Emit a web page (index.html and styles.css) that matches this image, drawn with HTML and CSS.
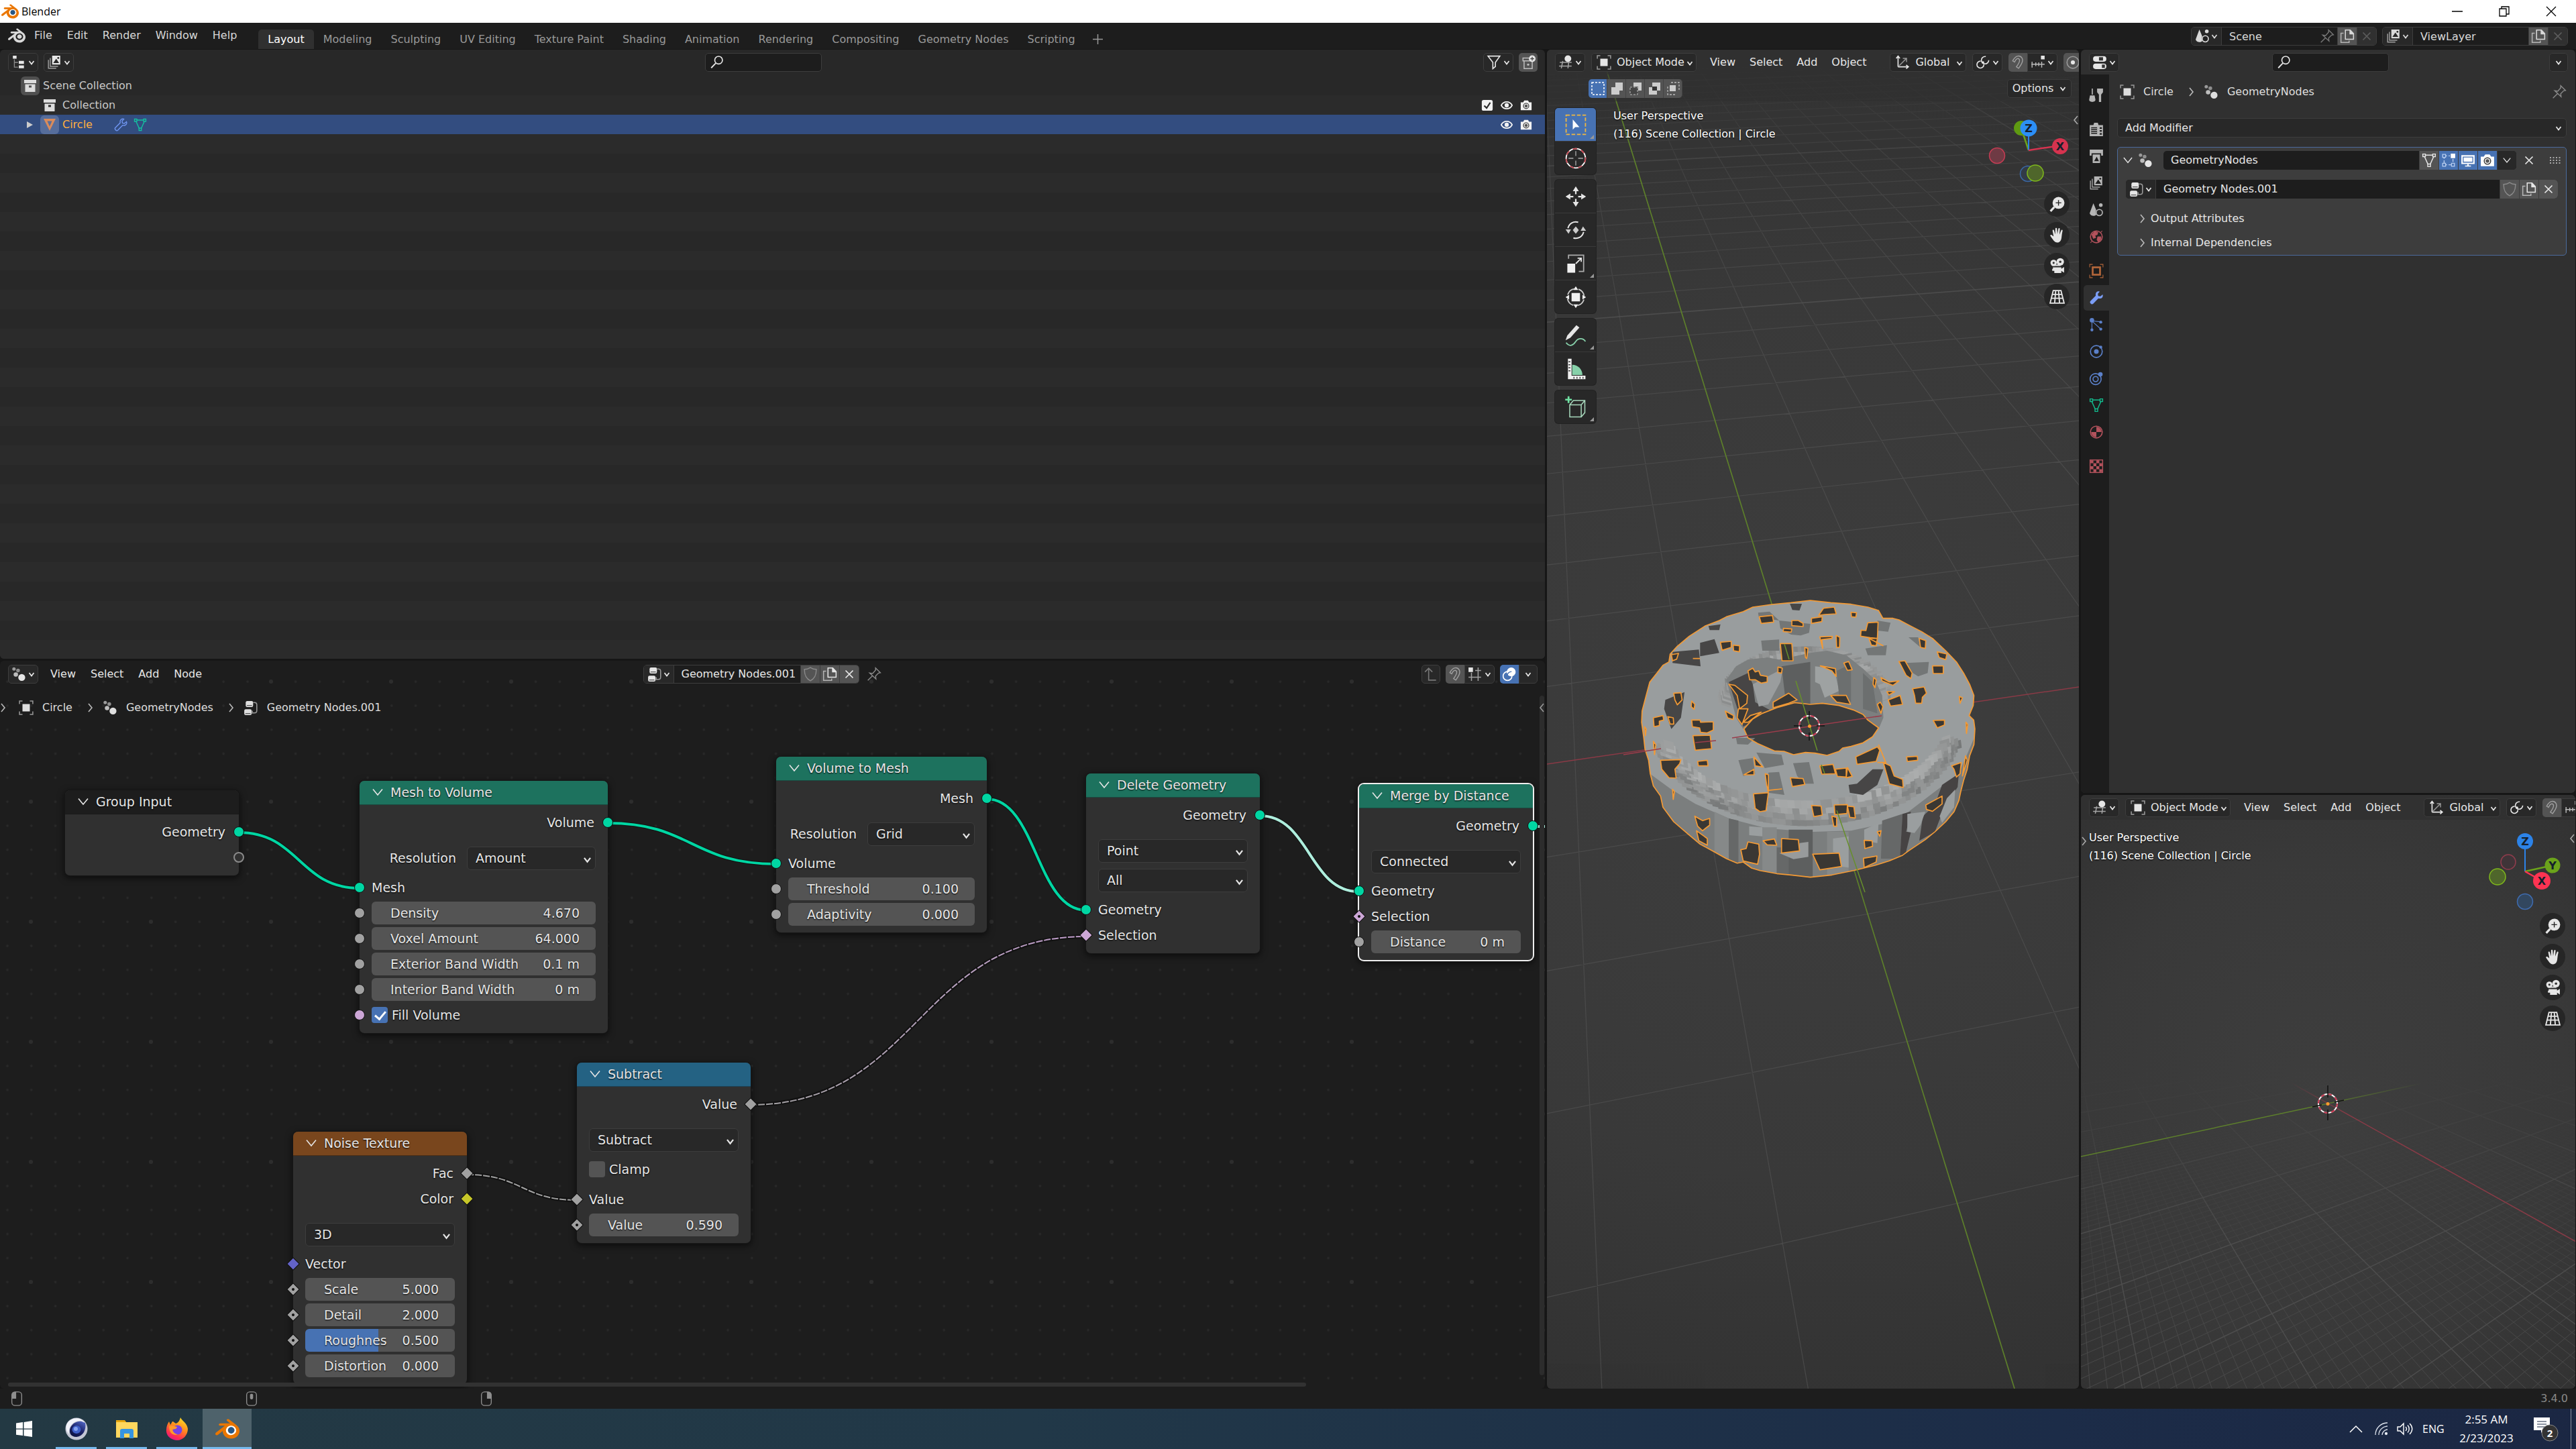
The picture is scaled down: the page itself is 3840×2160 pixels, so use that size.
FILE: index.html
```html
<!DOCTYPE html>
<html lang="en">
<head>
<meta charset="utf-8">
<title>Blender</title>
<link rel="stylesheet" href="styles.css">
</head>
<body>
<svg class="sprite" aria-hidden="true">
  <defs>
    <symbol id="i-down" viewBox="0 0 10 10"><path d="M1.5 3 5 7.5 8.5 3" fill="none" stroke="currentColor" stroke-width="1.7"/></symbol>
    <symbol id="i-fold" viewBox="0 0 16 16"><path d="M1 3.500 8 12 15 3.500" fill="none" stroke="currentColor" stroke-width="1.6"/></symbol>
    <symbol id="i-right" viewBox="0 0 10 16"><path d="M2 2l5 6-5 6" fill="none" stroke="currentColor" stroke-width="1.6"/></symbol>
    <symbol id="i-left" viewBox="0 0 10 16"><path d="M8 2 3 8l5 6" fill="none" stroke="currentColor" stroke-width="1.6"/></symbol>
    <symbol id="i-x" viewBox="0 0 20 20"><path d="M5 5l10 10M15 5 5 15" fill="none" stroke="currentColor" stroke-width="1.6"/></symbol>
    <symbol id="i-blender" viewBox="0 0 24 24"><path fill="currentColor" d="M12.51 13.214c.046-.8.438-1.506 1.03-2.006a3.424 3.424 0 0 1 2.212-.79c.85 0 1.631.3 2.211.79.592.5.983 1.206 1.028 2.005.045.823-.285 1.586-.865 2.153a3.389 3.389 0 0 1-2.374.938 3.393 3.393 0 0 1-2.376-.938c-.58-.567-.91-1.33-.865-2.152M7.35 14.831c.006.314.106.922.256 1.398a7.372 7.372 0 0 0 1.593 2.757 8.227 8.227 0 0 0 2.787 2.001 8.947 8.947 0 0 0 3.66.76 8.964 8.964 0 0 0 3.657-.772 8.285 8.285 0 0 0 2.785-2.01 7.428 7.428 0 0 0 1.592-2.762 6.964 6.964 0 0 0 .25-3.074 7.123 7.123 0 0 0-1.016-2.779 7.764 7.764 0 0 0-1.852-2.043h.002L13.566 2.55l-.02-.015c-.492-.378-1.319-.376-1.86.002-.547.382-.609 1.015-.123 1.415l-.001.001 3.126 2.543-9.53.01h-.013c-.788.001-1.545.518-1.695 1.172-.154.665.38 1.217 1.2 1.22V8.9l4.83-.01-8.62 6.617-.034.025c-.813.622-1.075 1.658-.563 2.313.52.667 1.625.668 2.447.004L7.414 14s-.069.52-.063.831zm12.09 1.741c-.97.988-2.326 1.548-3.795 1.55-1.47.004-2.827-.552-3.797-1.538a4.51 4.51 0 0 1-1.036-1.622 4.282 4.282 0 0 1 .282-3.519 4.702 4.702 0 0 1 1.153-1.371c.942-.768 2.141-1.183 3.396-1.185 1.256-.002 2.455.41 3.398 1.175.48.391.87.854 1.152 1.367a4.28 4.28 0 0 1 .522 1.706 4.236 4.236 0 0 1-.239 1.811 4.54 4.54 0 0 1-1.035 1.626"/></symbol>
    <symbol id="i-blendercolor" viewBox="0 0 24 24"><circle cx="15.700" cy="13.400" r="6" fill="#fff"/><use href="#i-blender" width="24" height="24" color="#ea7600"/><circle cx="15.750" cy="13.400" r="3.200" fill="#265787"/></symbol>
    <symbol id="i-tree" viewBox="0 0 20 20"><path d="M2 1h5v4H2zM10 8h7v4h-7zM10 14h7v4h-7z" fill="currentColor"/><path d="M4 6v10.500h5M4 10h5" fill="none" stroke="#8c8c8c" stroke-width="1.200"/></symbol>
    <symbol id="i-layers" viewBox="0 0 20 20"><path d="M7 1h11v12H7zM8.500 11h8L12.500 5z" fill="currentColor" fill-rule="evenodd"/><circle cx="15.300" cy="4" r="1.300" fill="#222"/><path d="M4.500 4v11.500H15M2 6.500V18h10.500" fill="none" stroke="#a0a0a0" stroke-width="1.300"/></symbol>
    <symbol id="i-search" viewBox="0 0 20 20"><circle cx="12" cy="7" r="5.200" fill="none" stroke="currentColor" stroke-width="1.500"/><path d="M8.200 11 2 17.500" stroke="currentColor" stroke-width="1.700"/></symbol>
    <symbol id="i-filter" viewBox="0 0 20 20"><path d="M2 1.500h16L12 10v5.500L8.500 18.500V10z" fill="none" stroke="currentColor" stroke-width="1.500"/></symbol>
    <symbol id="i-newcol" viewBox="0 0 20 20"><path d="M11 4H3v4h14M4.500 8v10.500h11V9" fill="none" stroke="#bdbdbd" stroke-width="1.400"/><circle cx="10" cy="13" r="1.500" fill="#bdbdbd"/><circle cx="15.500" cy="5" r="4.500" fill="#e6e6e6"/><path d="M15.500 2.500v5M13 5h5" stroke="#444" stroke-width="1.200"/></symbol>
    <symbol id="i-box" viewBox="0 0 20 20"><path d="M1 1h18v5H1zM2.500 7.500h15V19h-15zM8 9.500v3h4v-3z" fill="currentColor" fill-rule="evenodd"/></symbol>
    <symbol id="i-tri" viewBox="0 0 20 20"><path d="M1 1h18l-9 18zM6.500 4.500 10 12.500l3.500-8z" fill="currentColor" fill-rule="evenodd"/></symbol>
    <symbol id="i-wrench" viewBox="0 0 20 20"><path d="M18.500 5.500 15.500 8l-3-.5-.5-3L14.500 1.500C11.500.5 9 2.500 9 5.500c0 1 .2 1.500.2 1.500L1.800 14.500c-1.500 2 1.700 5.200 3.700 3.700l7.300-7.500s3 1 5-1c1.200-1.200 1.200-3 .7-4.200z" fill="none" stroke="currentColor" stroke-width="1.400"/></symbol>
    <symbol id="i-wrenchfill" viewBox="0 0 20 20"><path d="M18.500 5.500 15.500 8l-3-.5-.5-3L14.500 1.500C11.500.5 9 2.500 9 5.500c0 1 .2 1.500.2 1.500L1.800 14.500c-1.500 2 1.700 5.200 3.700 3.700l7.300-7.500s3 1 5-1c1.200-1.200 1.200-3 .7-4.200z" fill="currentColor"/></symbol>
    <symbol id="i-mesh" viewBox="0 0 20 20"><path d="M5 3h10M3.800 5l4.700 10.500M16.200 5l-4.700 10.500" stroke="currentColor" stroke-width="1.400"/><path d="M1.500 1.500h3.500v3.500H1.500zM15 1.500h3.500v3.500H15zM8.200 15h3.600v3.500H8.200z" fill="none" stroke="currentColor" stroke-width="1.300"/></symbol>
    <symbol id="i-check" viewBox="0 0 20 20"><rect x="1" y="1" width="18" height="18" rx="3" fill="currentColor"/><path d="M5 10.500 9 14.500 15 5.500" fill="none" stroke="#2b2b2b" stroke-width="2.400"/></symbol>
    <symbol id="i-eye" viewBox="0 0 20 20"><path d="M1 10c4-7.500 14-7.500 18 0-4 7.500-14 7.500-18 0z" fill="none" stroke="currentColor" stroke-width="2"/><circle cx="10" cy="10" r="3.500" fill="currentColor"/></symbol>
    <symbol id="i-camera" viewBox="0 0 20 20"><path d="M1 5h4l2-3h6l2 3h4v13H1z" fill="currentColor"/><circle cx="10" cy="11" r="5" fill="#333"/><circle cx="10" cy="11" r="3.700" fill="currentColor"/><circle cx="10" cy="11" r="2.500" fill="#555"/></symbol>
    <symbol id="i-view3d" viewBox="0 0 20 20"><path d="M2 10h16M1 15h17M6 8 4 18M14 10l-1 8" stroke="#a5a5a5" stroke-width="1.400"/><circle cx="13" cy="5" r="4.500" fill="currentColor"/></symbol>
    <symbol id="i-object" viewBox="0 0 20 20"><path d="M5 5h10v10H5z" fill="currentColor"/><path d="M1 5V1h4M15 1h4v4M19 15v4h-4M5 19H1v-4" fill="none" stroke="#999" stroke-width="1.400"/></symbol>
    <symbol id="i-axes" viewBox="0 0 20 20"><path d="M4 16V2M1.500 4.500 4 1.500l2.500 3M4 16h13M15 13.500l3 2.500-3 2.500" fill="none" stroke="currentColor" stroke-width="1.500"/><path d="M5 15 15 5M10.500 4.500H15.500V9.500" fill="none" stroke="#999" stroke-width="1.300"/></symbol>
    <symbol id="i-pivot" viewBox="0 0 20 20"><circle cx="6.500" cy="13" r="4.700" fill="none" stroke="currentColor" stroke-width="1.500" stroke-dasharray="22 7"/><circle cx="12.800" cy="7" r="5" fill="none" stroke="currentColor" stroke-width="1.500" stroke-dasharray="24 7"/><circle cx="10" cy="10" r="1.700" fill="currentColor"/></symbol>
    <symbol id="i-magnet" viewBox="0 0 20 20"><path d="M3 8c4-8 10-8 12.500-4s-1 9-4.500 14l-3-2c3-4 5-8 4-10s-4-2-6.500 3.500z" fill="none" stroke="#a0a0a0" stroke-width="1.300"/></symbol>
    <symbol id="i-snapinc" viewBox="0 0 20 20"><path d="M1 12.500h18M2 9v8M7 10v5M11 10v5M15 9v8" stroke="#bbb" stroke-width="1.300"/><path d="M14 1h5v5h-5z" fill="currentColor"/></symbol>
    <symbol id="i-prop" viewBox="0 0 20 20"><circle cx="10" cy="10" r="8" fill="none" stroke="#999" stroke-width="1.500"/><circle cx="10" cy="10" r="2.800" fill="currentColor"/></symbol>
    <symbol id="i-snapgrid" viewBox="0 0 20 20"><path d="M1 14h17M5 8v11M14 1v18M10 5h8" stroke="#a0a0a0" stroke-width="1.400"/><path d="M1 1h6v6H1z" fill="currentColor"/></symbol>
    <symbol id="i-overlay" viewBox="0 0 20 20"><circle cx="12.500" cy="7" r="6" fill="currentColor"/><circle cx="7.500" cy="12.500" r="6" fill="none" stroke="currentColor" stroke-width="1.500"/><path d="M7 12.500a6 6 0 0 1 6-6" fill="none" stroke="#4772b3" stroke-width="1.300"/></symbol>
    <symbol id="i-up" viewBox="0 0 20 20"><path d="M2 7l5-5 5 5M7 2v16h10" fill="none" stroke="#777" stroke-width="1.500"/></symbol>
    <symbol id="i-geo" viewBox="0 0 20 20"><circle cx="3.500" cy="3" r="2.300" fill="#9a9a9a"/><circle cx="9" cy="5" r="2.500" fill="#8f8f8f"/><circle cx="6" cy="10.500" r="3" fill="#bdbdbd"/><circle cx="14" cy="14.500" r="4.700" fill="currentColor"/></symbol>
    <symbol id="i-nodetree" viewBox="0 0 20 20"><rect x="3" y="1" width="10" height="8" rx="2" fill="currentColor"/><rect x="1" y="12" width="10" height="8" rx="2" fill="currentColor"/><path d="M4.500 7h7M2.500 18h7" stroke="#333" stroke-width="1"/><path d="M13 3h2c2 0 3 1 3 3v8c0 2-1 3-3 3h-3M12 14v4" fill="none" stroke="#999" stroke-width="1.400"/></symbol>
    <symbol id="i-shield" viewBox="0 0 20 20"><path d="M10 1c3 2 5.500 2.500 8 2.500 0 8-2 12.500-8 15.500C4 16 2 11.500 2 3.500c2.500 0 5-.5 8-2.500z" fill="none" stroke="#8a8a8a" stroke-width="1.400"/></symbol>
    <symbol id="i-copy" viewBox="0 0 20 20"><path d="M7.500 1.500H14l4.500 5V14h-11z" fill="none" stroke="currentColor" stroke-width="1.400"/><path d="M13 1v6.500h6z" fill="currentColor"/><path d="M5 6H1.500v12.500h11V16" fill="none" stroke="#b5b5b5" stroke-width="1.400"/></symbol>
    <symbol id="i-pin" viewBox="0 0 20 20"><path d="M12 1.500 18.500 8l-2.500.5-4 4 .5 4L4 8.500l4 .5 4-4.500zM7.500 12.500 1.500 18.500" fill="none" stroke="currentColor" stroke-width="1.300"/></symbol>
    <symbol id="i-scene" viewBox="0 0 20 20"><path d="M6 1l5 12c0 3-2 5-4.500 5S1 16.500 1 14z" fill="currentColor"/><circle cx="14.500" cy="13" r="5.500" fill="#222"/><circle cx="14" cy="13.500" r="4.200" fill="none" stroke="currentColor" stroke-width="1.500"/><circle cx="16" cy="3.500" r="2.500" fill="currentColor"/></symbol>
    <symbol id="i-props" viewBox="0 0 20 20"><rect x="1" y="1.500" width="18" height="7.500" rx="3.500" fill="currentColor"/><rect x="1" y="11.500" width="18" height="7.500" rx="3.500" fill="currentColor"/><path d="M9 3h5.500v4.500H9zM13 13h4v4.500h-4z" fill="#333"/></symbol>
    <symbol id="i-tools" viewBox="0 0 20 20"><path d="M4.500 1v8M2 11h5l1 5c0 3-7 3-7 0z" fill="currentColor" stroke="currentColor" stroke-width="1.500"/><path d="M11 1v5l2.500 3v10h3V9L19 6V1M13.500 1.500V5h3V1.500" fill="currentColor"/></symbol>
    <symbol id="i-render" viewBox="0 0 20 20"><path d="M1 4h5l1-3h5l1 3h6v15H1zM3 7h8v9H3zM14.500 7v2h3V7zM14.500 11v2h3v-2zM14.500 15v2h3v-2z" fill="currentColor" fill-rule="evenodd"/><path d="M3 9h8M3 11.500h8M3 14h8" stroke="currentColor"/></symbol>
    <symbol id="i-output" viewBox="0 0 20 20"><path d="M1 1h18v8h-2.500V6h-13v3H1z" fill="currentColor"/><path d="M5 7.500h10V19H5zM7 16.500h6.500l-3-6z" fill="currentColor" fill-rule="evenodd"/></symbol>
    <symbol id="i-world" viewBox="0 0 20 20"><circle cx="10" cy="10" r="8" fill="none" stroke="currentColor" stroke-width="1.500"/><path d="M4 7l4-4 4 1-1 3-3 1 1 3-3 1zM12 10l4 0 0 3-3 4-2-3zM18 2 16 4M2 18l2-2" fill="currentColor" stroke="currentColor"/></symbol>
    <symbol id="i-objprop" viewBox="0 0 20 20"><rect x="5" y="5" width="10" height="10" fill="none" stroke="currentColor" stroke-width="2.500"/><path d="M1 5V1h4M15 1h4v4M19 15v4h-4M5 19H1v-4" fill="none" stroke="currentColor"/></symbol>
    <symbol id="i-particles" viewBox="0 0 20 20"><path d="M4 6v12M5 5l10 1M5 6l10 9" stroke="currentColor"/><circle cx="4" cy="4" r="3" fill="currentColor"/><circle cx="16" cy="6.500" r="2" fill="currentColor"/><circle cx="16" cy="16" r="2" fill="currentColor"/><circle cx="4" cy="17" r="2" fill="currentColor"/></symbol>
    <symbol id="i-physics" viewBox="0 0 20 20"><circle cx="10" cy="10" r="8" fill="none" stroke="currentColor" stroke-width="1.500"/><circle cx="10" cy="10" r="3.200" fill="currentColor"/><circle cx="16" cy="4" r="2" fill="currentColor"/></symbol>
    <symbol id="i-constraint" viewBox="0 0 20 20"><circle cx="9" cy="11" r="7.500" fill="none" stroke="currentColor" stroke-width="1.500"/><circle cx="9" cy="11" r="3.500" fill="none" stroke="currentColor" stroke-width="1.500"/><circle cx="15.500" cy="4.500" r="3" fill="currentColor"/></symbol>
    <symbol id="i-material" viewBox="0 0 20 20"><circle cx="10" cy="10" r="8" fill="none" stroke="currentColor" stroke-width="1.500"/><path d="M10 10V3a7 7 0 0 1 7 7zM10 10v7a7 7 0 0 1-7-7z" fill="currentColor"/></symbol>
    <symbol id="i-texture" viewBox="0 0 20 20"><rect x="1.500" y="1.500" width="17" height="17" fill="none" stroke="currentColor" stroke-width="1.300"/><path d="M2 2h4v4H2zM10 2h4v4h-4zM6 6h4v4H6zM14 6h4v4h-4zM2 10h4v4H2zM10 10h4v4h-4zM6 14h4v4H6zM14 14h4v4h-4z" fill="currentColor"/></symbol>
    <symbol id="i-edit" viewBox="0 0 20 20"><path d="M4 4h8M4 4v12M4 16h12M16 8v8" stroke="#b8cdf0" stroke-width="1.300" stroke-dasharray="4 2"/><path d="M13 1h6v6h-6z" fill="currentColor"/><path d="M2 2h4v4H2zM2 14h4v4H2zM14 14h4v4h-4z" fill="#4772b3" stroke="#b8cdf0" stroke-width="1.200"/></symbol>
    <symbol id="i-monitor" viewBox="0 0 20 20"><path d="M1 3h18v12H1z" fill="currentColor"/><path d="M3.500 5.500h13v7h-13z" fill="none" stroke="#4772b3" stroke-width="1.200"/><path d="M9 15h2v2h3v1.500H6V17h3z" fill="currentColor"/></symbol>
    <symbol id="i-zoom" viewBox="0 0 24 24"><circle cx="14" cy="10" r="8.500" fill="currentColor"/><path d="M8 16 2.500 22" stroke="currentColor" stroke-width="3"/><path d="M14 6v8M10 10h8" stroke="#222" stroke-width="1.300"/></symbol>
    <symbol id="i-hand" viewBox="0 0 24 24"><path d="M7 14 5.500 6c-.4-2 1.800-2.300 2.200-.5L9.300 11 9.500 3c0-1.800 2.200-1.800 2.300 0l.6 7.500L13.700 3c.3-1.600 2.400-1.300 2.200.4l-.6 7.800 2.500-6c.6-1.500 2.400-.8 2 .8-1 4-1 6-1.500 9.500-.5 4-2.300 7-6 7-4.500 0-6-4-9.800-9-1-1.400.7-2.600 2-1.500z" fill="currentColor"/></symbol>
    <symbol id="i-cam" viewBox="0 0 24 24"><circle cx="7" cy="7.500" r="4.500" fill="currentColor"/><circle cx="16.500" cy="6" r="5.300" fill="currentColor"/><circle cx="7" cy="7.500" r="1.500" fill="#333"/><circle cx="16.500" cy="6" r="1.700" fill="#333"/><path d="M6 14h12v2l4-2.500v8L18 19v3H8v-3H5v-3h1zM5 10h12v2H5z" fill="currentColor"/></symbol>
    <symbol id="i-persp" viewBox="0 0 24 24"><path d="M6.500 3h11L22 21H2zM4.500 14h15M5.500 8.500h13M10 3 8.500 21M14 3l1.500 18" fill="none" stroke="currentColor" stroke-width="1.800"/></symbol>
    <symbol id="i-corner" viewBox="0 0 8 8"><path d="M8 0v8H0z" fill="currentColor"/></symbol>
    <symbol id="i-mouse-l" viewBox="0 0 18 24"><rect x="1" y="1" width="16" height="22" rx="5" fill="none" stroke="#8e8e8e" stroke-width="1.500"/><path d="M8 1v11H1V6c0-3 2-5 4-5z" fill="#8e8e8e"/></symbol>
    <symbol id="i-mouse-m" viewBox="0 0 18 24"><rect x="1" y="1" width="16" height="22" rx="5" fill="none" stroke="#8e8e8e" stroke-width="1.500"/><rect x="6.500" y="4" width="5" height="9" rx="2" fill="#8e8e8e"/></symbol>
    <symbol id="i-mouse-r" viewBox="0 0 18 24"><rect x="1" y="1" width="16" height="22" rx="5" fill="none" stroke="#8e8e8e" stroke-width="1.500"/><path d="M10 1v11h7V6c0-3-2-5-4-5z" fill="#8e8e8e"/></symbol>
  </defs>
</svg>

<header class="titlebar">
  <svg class="ic26"><use href="#i-blendercolor"/></svg><span>Blender</span>
  <div class="winbtns">
    <button aria-label="Minimize"><svg width="16" height="16"><path d="M0 8h16" stroke="#000" stroke-width="1.500"/></svg></button>
    <button aria-label="Restore"><svg width="16" height="16"><path d="M1 4h10v11H1zM4 4V1h11v11h-4" fill="none" stroke="#000" stroke-width="1.300"/></svg></button>
    <button aria-label="Close"><svg width="16" height="16"><path d="M1 1l14 14M15 1 1 15" stroke="#000" stroke-width="1.300"/></svg></button>
  </div>
</header>

<nav class="topbar">
  <button class="logo" aria-label="Blender menu"><svg class="ic26"><use href="#i-blender"/></svg></button>
  <div class="menu"><button>File</button><button>Edit</button><button>Render</button><button>Window</button><button>Help</button></div>
  <div class="tabs"><button class="active">Layout</button><button>Modeling</button><button>Sculpting</button><button>UV Editing</button><button>Texture Paint</button><button>Shading</button><button>Animation</button><button>Rendering</button><button>Compositing</button><button>Geometry Nodes</button><button>Scripting</button><button aria-label="Add workspace"><svg width="15" height="15"><path d="M7.500 0v15M0 7.500h15" stroke="#999" stroke-width="1.500"/></svg></button></div>
  <div class="idgroup top">
    <button class="idicon" aria-label="Browse scene"><svg class="ic"><use href="#i-scene"/></svg><svg class="cd"><use href="#i-down"/></svg></button>
    <input value="Scene" aria-label="Scene name"><svg class="ic dim pin"><use href="#i-pin"/></svg>
    <button class="seg" aria-label="New scene"><svg class="ic"><use href="#i-copy"/></svg></button><button class="seg off" aria-label="Delete scene"><svg class="ic"><use href="#i-x"/></svg></button>
  </div>
  <div class="idgroup top">
    <button class="idicon" aria-label="Browse view layer"><svg class="ic"><use href="#i-layers"/></svg><svg class="cd"><use href="#i-down"/></svg></button>
    <input value="ViewLayer" aria-label="View layer name">
    <button class="seg" aria-label="New view layer"><svg class="ic"><use href="#i-copy"/></svg></button><button class="seg off" aria-label="Delete view layer"><svg class="ic"><use href="#i-x"/></svg></button>
  </div>
</nav>

<main class="workspace">
  <div class="col col-left">
    <section class="area outliner">
      <div class="head">
        <button class="pull"><svg class="ic"><use href="#i-tree"/></svg><svg class="cd"><use href="#i-down"/></svg></button>
        <button class="pull"><svg class="ic"><use href="#i-layers"/></svg><svg class="cd"><use href="#i-down"/></svg></button>
        <span class="grow"></span>
        <label class="search out-search"><svg class="ic"><use href="#i-search"/></svg><input aria-label="Filter outliner"></label>
        <span class="grow wide"></span>
        <button class="pull"><svg class="ic"><use href="#i-filter"/></svg><svg class="cd"><use href="#i-down"/></svg></button>
        <button class="sq"><svg class="ic"><use href="#i-newcol"/></svg></button>
      </div>
      <ul class="tree">
        <li class="lvl0"><span class="badge grey"><svg class="ic20"><use href="#i-box"/></svg></span><span>Scene Collection</span></li>
        <li class="lvl1"><span class="badge"><svg class="ic20"><use href="#i-box"/></svg></span><span>Collection</span><span class="flags"><svg><use href="#i-check"/></svg><svg><use href="#i-eye"/></svg><svg><use href="#i-camera"/></svg></span></li>
        <li class="lvl1 sel"><i class="disc"></i><span class="badge blue"><svg class="ic20"><use href="#i-tri"/></svg></span><span class="obj">Circle</span><svg class="ic20 mod"><use href="#i-wrench"/></svg><svg class="ic20 data"><use href="#i-mesh"/></svg><span class="flags"><svg><use href="#i-eye"/></svg><svg><use href="#i-camera"/></svg></span></li>
      </ul>
    </section>

    <section class="area nodes">
      <div class="canvas">
        <svg class="links">
          <defs>
            <pattern id="dots" x="-7" y="49" width="35.800" height="35.800" patternUnits="userSpaceOnUse"><circle cx="18" cy="18" r="1.800" fill="#292929"/></pattern>
            <pattern id="dots5" x="28" y="192" width="179" height="179" patternUnits="userSpaceOnUse"><circle cx="18" cy="18" r="3" fill="#2d2d2d"/></pattern>
            <linearGradient id="sel" gradientUnits="userSpaceOnUse" x1="1118" y1="0" x2="1619" y2="0"><stop offset="0" stop-color="#a1a1a1"/><stop offset="1" stop-color="#c09ccb"/></linearGradient>
          </defs>
          <rect width="100%" height="100%" fill="url(#dots)"/><rect width="100%" height="100%" fill="url(#dots5)"/>
          <g fill="none" stroke="#111" stroke-width="6"><path d="M356 256C446 256 446 339 536 339M906 242C1031 242 1031 303 1157 303M1471 206C1545 206 1545 372 1619 372"/><path d="M1878 231C1952 231 1952 344 2025 344M1118 662C1368 662 1368 411 1619 411M696 766C778 766 778 804 860 804"/></g>
          <g fill="none" stroke="#00d6a3" stroke-width="4"><path d="M356 256C446 256 446 339 536 339M906 242C1031 242 1031 303 1157 303M1471 206C1545 206 1545 372 1619 372"/></g>
          <path d="M1878 231C1952 231 1952 344 2025 344M2285 247H2303" fill="none" stroke="#aeeedd" stroke-width="4"/>
          <path d="M1118 662C1368 662 1368 411 1619 411" fill="none" stroke="url(#sel)" stroke-width="2" stroke-dasharray="10 2"/>
          <path d="M696 766C778 766 778 804 860 804" fill="none" stroke="#a1a1a1" stroke-width="2" stroke-dasharray="10 2"/>
        </svg>

        <article class="node n-group">
          <h3 class="input"><svg><use href="#i-fold"/></svg>Group Input</h3>
          <div class="row out geo">Geometry<b></b></div><div class="row out ext"><b></b></div>
        </article>
        <article class="node n-m2v">
          <h3><svg><use href="#i-fold"/></svg>Mesh to Volume</h3>
          <div class="row out geo">Volume<b></b></div>
          <div class="props"><label class="prop"><span>Resolution</span><span class="dd"><select><option>Amount</option></select><svg class="cd"><use href="#i-down"/></svg></span></label></div>
          <div class="row geo"><b></b>Mesh</div>
          <div class="row val"><b></b><label class="num"><span>Density</span><input value="4.670"></label></div>
          <div class="row val"><b></b><label class="num"><span>Voxel Amount</span><input value="64.000"></label></div>
          <div class="row val"><b></b><label class="num"><span>Exterior Band Width</span><input value="0.1 m"></label></div>
          <div class="row val"><b></b><label class="num"><span>Interior Band Width</span><input value="0 m"></label></div>
          <div class="row bool"><b></b><label class="tick"><input type="checkbox" checked>Fill Volume</label></div>
        </article>
        <article class="node n-v2m">
          <h3><svg><use href="#i-fold"/></svg>Volume to Mesh</h3>
          <div class="row out geo">Mesh<b></b></div>
          <div class="props"><label class="prop"><span>Resolution</span><span class="dd"><select><option>Grid</option></select><svg class="cd"><use href="#i-down"/></svg></span></label></div>
          <div class="row geo"><b></b>Volume</div>
          <div class="row val"><b></b><label class="num"><span>Threshold</span><input value="0.100"></label></div>
          <div class="row val"><b></b><label class="num"><span>Adaptivity</span><input value="0.000"></label></div>
        </article>
        <article class="node n-del">
          <h3><svg><use href="#i-fold"/></svg>Delete Geometry</h3>
          <div class="row out geo">Geometry<b></b></div>
          <div class="props"><span class="dd"><select aria-label="Domain"><option>Point</option></select><svg class="cd"><use href="#i-down"/></svg></span><span class="dd"><select aria-label="Mode"><option>All</option></select><svg class="cd"><use href="#i-down"/></svg></span></div>
          <div class="row geo"><b></b>Geometry</div>
          <div class="row bool dia"><b></b>Selection</div>
        </article>
        <article class="node n-merge active">
          <h3><svg><use href="#i-fold"/></svg>Merge by Distance</h3>
          <div class="row out geo">Geometry<b></b></div>
          <div class="props"><span class="dd"><select aria-label="Merge mode"><option>Connected</option></select><svg class="cd"><use href="#i-down"/></svg></span></div>
          <div class="row geo"><b></b>Geometry</div>
          <div class="row bool dia dot"><b></b>Selection</div>
          <div class="row val"><b></b><label class="num"><span>Distance</span><input value="0 m"></label></div>
        </article>
        <article class="node n-sub">
          <h3 class="conv"><svg><use href="#i-fold"/></svg>Subtract</h3>
          <div class="row out val dia">Value<b></b></div>
          <div class="props"><span class="dd"><select aria-label="Operation"><option>Subtract</option></select><svg class="cd"><use href="#i-down"/></svg></span></div>
          <div class="row last"><label class="tick"><input type="checkbox">Clamp</label></div>
          <div class="row val dia"><b></b>Value</div>
          <div class="row val dia dot"><b></b><label class="num"><span>Value</span><input value="0.590"></label></div>
        </article>
        <article class="node n-noise">
          <h3 class="tex"><svg><use href="#i-fold"/></svg>Noise Texture</h3>
          <div class="row out val dia">Fac<b></b></div><div class="row out col-s dia">Color<b></b></div>
          <div class="props"><span class="dd"><select aria-label="Dimensions"><option>3D</option></select><svg class="cd"><use href="#i-down"/></svg></span></div>
          <div class="row vec dia"><b></b>Vector</div>
          <div class="row val dia dot"><b></b><label class="num"><span>Scale</span><input value="5.000"></label></div>
          <div class="row val dia dot"><b></b><label class="num"><span>Detail</span><input value="2.000"></label></div>
          <div class="row val dia dot"><b></b><label class="num half"><span>Roughnes</span><input value="0.500"></label></div>
          <div class="row val dia dot"><b></b><label class="num"><span>Distortion</span><input value="0.000"></label></div>
        </article>
      </div>
      <i class="vbar"></i><i class="hbar"></i>
      <div class="head node-head">
        <div class="side">
          <button class="pull"><svg class="ic"><use href="#i-geo"/></svg><svg class="cd"><use href="#i-down"/></svg></button>
          <div class="menu"><button>View</button><button>Select</button><button>Add</button><button>Node</button></div>
        </div>
        <div class="mid">
          <div class="idgroup">
            <button class="idicon" aria-label="Browse node group"><svg class="ic"><use href="#i-nodetree"/></svg><svg class="cd"><use href="#i-down"/></svg></button>
            <input value="Geometry Nodes.001" aria-label="Node group name">
            <button class="seg"><svg class="ic"><use href="#i-shield"/></svg></button><button class="seg"><svg class="ic"><use href="#i-copy"/></svg></button><button class="seg"><svg class="ic"><use href="#i-x"/></svg></button>
          </div>
          <button class="bare"><svg class="ic dim"><use href="#i-pin"/></svg></button>
        </div>
        <div class="side end">
          <button class="sq dark"><svg class="ic"><use href="#i-up"/></svg></button>
          <div class="join"><button class="sq"><svg class="ic"><use href="#i-magnet"/></svg></button><button class="pull"><svg class="ic"><use href="#i-snapgrid"/></svg><svg class="cd"><use href="#i-down"/></svg></button></div>
          <div class="join"><button class="sq on"><svg class="ic"><use href="#i-overlay"/></svg></button><button class="sq dark"><svg class="cd"><use href="#i-down"/></svg></button></div>
        </div>
      </div>
      <nav class="crumbs node-crumbs">
        <svg class="arr"><use href="#i-right"/></svg><svg class="ic first"><use href="#i-object"/></svg><span>Circle</span><svg class="arr"><use href="#i-right"/></svg><svg class="ic"><use href="#i-geo"/></svg><span>GeometryNodes</span><svg class="arr"><use href="#i-right"/></svg><svg class="ic"><use href="#i-nodetree"/></svg><span>Geometry Nodes.001</span>
        <svg class="arr end"><use href="#i-left"/></svg>
      </nav>
    </section>
  </div>

  <section class="area view main-view">
    <svg class="scene" viewBox="2306 74 793 1996" preserveAspectRatio="xMidYMid slice">
      <defs>
        <radialGradient id="bg1" gradientUnits="userSpaceOnUse" cx="2703" cy="1100" r="1100"><stop offset="0" stop-color="#3e3e3e"/><stop offset=".6" stop-color="#393939"/><stop offset="1" stop-color="#313131"/></radialGradient>
        <linearGradient id="g1" gradientUnits="userSpaceOnUse" x1="0" y1="90" x2="0" y2="700"><stop offset="0" stop-color="#505050" stop-opacity=".1"/><stop offset=".3" stop-color="#505050" stop-opacity=".7"/><stop offset="1" stop-color="#505050"/></linearGradient>
      </defs>
      <rect x="2000" y="0" width="1400" height="2200" fill="url(#bg1)"/>
      <g id="grid-main" stroke="url(#g1)"></g>
      <path d="M2306 1139 3099 1024" stroke="#8a3a46" stroke-width="1.500"/>
      <path d="M2387 79 3003 2070" stroke="#5d7f2b" stroke-width="1.700"/>
      <svg x="2420" y="870" width="560" height="460" viewBox="0 0 1568 1380" preserveAspectRatio="none">
        <clipPath id="body"><path id="rim" d="M780 75 820 80 865 85 950 92 1020 105 1065 120 1083 155 1125 155 1150 162 1200 190 1245 215 1290 245 1345 300 1390 350 1420 400 1445 450 1463 500 1460 545 1443 590 1462 610 1467 650 1463 720 1445 770 1435 830 1420 880 1408 930 1400 970 1380 1020 1345 1065 1300 1110 1260 1145 1190 1195 1165 1215 1110 1240 1050 1260 960 1283 870 1303 780 1313 700 1303 640 1297 570 1283 535 1272 500 1245 475 1250 430 1230 380 1200 320 1165 270 1120 210 1065 165 1000 155 950 125 905 112 850 105 790 90 740 85 690 76 620 78 570 95 500 110 440 140 400 165 365 190 350 195 315 225 280 275 235 340 190 400 165 430 148 500 125 540 105 620 93 700 85Z"/></clipPath>
        <g clip-path="url(#body)">
          <rect width="1568" height="1380" fill="#999d9e"/>
          <path d="M60 700 110 850 200 920 300 985 440 1050 600 1095 790 1110 950 1105 1080 1075 1190 1020 1300 930 1400 850 1500 600V1380H0V700z" fill="#7b7e7e"/>
          <g id="facets"></g>
          <path d="M380 1020l60 30v200h-60zM580 1090h60v220h-60zM850 1110h90v200h-90z" fill="#868989"/>
          <path d="M440 1050l40 10v200h-40zM640 1180h60v130h-60zM1080 1060l85-30-10 200h-80z" fill="#666868"/>
          <path d="M690 1100h100v210h-100z" fill="#5d5f5f"/><path d="M650 1205 730 1195 735 1160 772 1155V1222L710 1232z" fill="#989b9c"/>
          <path d="M1165 1030 1200 1020 1180 1110 1200 1110 1175 1220 1155 1215zM1250 1040 1300 990 1330 900 1400 850 1395 910 1340 1000 1300 1110 1235 1150z" fill="#464343"/>
          <path d="M1185 1030 1260 1020 1240 1080 1215 1115 1185 1110zM875 1140l65-10v140l-30-5-10-60-25-5zM1005 1100l60-30-5 90-55-10zM525 1085l55 5v40l-55-5z" fill="#9a9e9f"/>
          <path d="M1350 960 1385 920 1380 1000 1330 1070 1320 1040z" fill="#9a9e9f"/>
          <path d="M430 430 470 370 520 340 600 330 650 340 780 310 850 300 930 320 1000 380 1050 430 1080 500 1085 600 1065 650H500L470 600z" fill="#7c7f7f"/>
          <path d="M660 370l120-20v200H680z" fill="#5d5f5f"/><path d="M440 440l80-40 20 50 10 80 70 40-120 70z" fill="#474545"/><path d="M540 450l125-70-10 60-50 100-40 10z" fill="#9a9d9e"/><path d="M800 370l80 10 20 100-60 30-20-60-20-10z" fill="#9ea2a2"/><path d="M890 390l60-30v170l-50-30zM1000 400l40 40 20 140-60-20z" fill="#6c6f6f"/>
          <path d="M503 650 540 605 580 580 640 555 715 532 780 540 830 535 900 545 960 565 1000 585 1020 610 1065 645 1040 685 1000 712 950 728 915 735 900 750 850 768 800 758 760 755 710 765 670 750 630 748 560 715 520 690Z" fill="#3c3c3c"/>
          <path d="M562 130 610 125 650 165 565 150zM650 165 780 180 775 220 740 232 700 228 655 200zM575 255 650 250 650 300 580 300zM1060 165 1115 175 1105 215 1060 210zM1010 290 1100 275 1095 320 1020 320zM1190 240 1230 240 1240 285zM1180 355 1275 350 1270 400 1230 415 1180 380zM470 690 550 690 520 720 475 718zM480 790 540 780 550 850 500 860zM708 803 775 798 795 895 755 895 725 860zM605 845 650 842 672 945 605 935zM555 755 660 765 670 810 590 825z" fill="#737676"/>
          <path d="M320 265 380 248 400 310 320 325zM205 305 315 295 322 370 205 355zM175 520 255 485 240 600 200 650 170 560zM355 190 405 182 400 208 360 208zM695 90 745 90 735 120 705 118zM975 895 1040 830 1085 830 1060 900 1000 945 945 935 940 900z" fill="#474646"/>
        </g>
        <g fill="#3a3733" stroke="#f39a35" stroke-width="1.700" stroke-linejoin="round" id="holes">
          <path vector-effect="non-scaling-stroke" d="M567 148 622 142 627 172 575 178zM835 110 880 105 888 135 840 138 815 142zM785 155 830 148 828 170 785 178zM703 165 730 165 750 178 750 192 703 188zM668 200 703 203 700 217 667 214zM950 128 973 130 970 150 952 148zM1020 175 1063 172 1060 245 1030 242 990 235 992 208 1012 210zM1025 245 1060 245 1055 278 1035 275zM405 262 450 258 450 285 412 298zM458 275 485 278 484 305 460 300zM655 268 703 268 708 345 662 345zM820 238 872 236 870 245 828 250 832 290zM888 232 903 240 902 285 890 285zM757 285 770 290 765 335 760 330zM200 318 230 312 222 338 205 345zM1235 245 1262 255 1260 290 1240 285zM1310 305 1350 315 1345 340 1318 330zM1290 368 1335 368 1335 402 1293 402zM1150 348 1175 345 1205 400 1200 425 1180 410z"/>
          <path vector-effect="non-scaling-stroke" d="M520 390 540 378 550 395 565 390 572 410 600 415 600 440 575 445 550 430 527 430zM645 373 663 378 660 400 645 398zM920 355 940 348 955 385 935 388zM822 368 885 380 888 415 870 390zM1075 420 1110 440 1150 435 1125 455 1080 435zM1045 420 1055 430 1050 465 1042 450zM1105 520 1155 500 1165 540 1115 548zM1100 483 1132 483 1108 498zM1207 470 1255 462 1265 490 1248 508 1245 535 1220 535 1215 500zM210 490 240 488 245 520 225 542 215 520zM285 525 298 540 295 562 283 550zM125 600 165 590 168 610 150 615 150 635 128 640zM185 595 208 600 210 628 195 628zM285 610 320 610 322 620 375 618 375 655 348 668 322 665 318 645 288 640zM290 680 362 678 368 738 300 745zM310 795 350 790 353 815 313 815zM155 790 240 787 235 805 215 830 220 870 190 868 160 830zM440 450 465 455 518 500 515 535 485 560 475 500zM480 560 520 560 495 630 475 600zM425 570 460 590 458 608 435 600zM625 530 690 490 725 520 690 535 625 555zM865 500 930 500 948 540 890 530zM1060 540 1072 530 1083 550 1075 580zM500 620 530 590 575 575 520 620z"/>
          <path vector-effect="non-scaling-stroke" d="M1293 612 1340 610 1340 632 1310 645zM1182 775 1227 772 1228 790 1185 795zM1085 800 1115 815 1130 860 1165 875 1168 912 1110 895zM970 775 1060 730 1070 745 1055 795 975 808zM820 815 875 808 885 850 828 852zM885 830 930 825 930 865 893 862zM935 822 955 862 930 868zM697 868 750 872 757 898 705 908zM543 940 605 935 595 1015 570 1020 550 1005zM592 850 605 855 605 930 598 900zM545 775 582 820 550 815zM503 855 545 830 545 855zM785 992 825 995 830 1035 795 1042zM880 990 935 988 933 1028 883 1033zM935 995 962 998 968 1048 945 1045zM870 1040 890 1045 890 1085 878 1085zM1262 990 1330 950 1330 985 1290 1018 1265 1010zM1370 815 1410 800 1405 850 1390 865 1380 830zM298 1040 330 1060 360 1050 360 1080 330 1105 310 1085zM305 1105 350 1140 350 1170 315 1150zM490 1190 512 1185 520 1155 565 1165 568 1210 560 1255 500 1240zM583 1150 630 1142 640 1170 600 1168zM660 1140 730 1145 735 1195 660 1205zM790 1210 900 1205 910 1265 820 1280zM1005 1148 1038 1150 1040 1175 1008 1185zM1002 1228 1058 1218 1055 1245 1005 1270zM1060 1110 1075 1105 1070 1130zM88 640 95 650 92 680zM125 705 135 720 130 765zM205 920 213 930 208 965zM1402 505 1415 510 1405 535zM1430 620 1437 630 1432 670zM1428 770 1435 790 1415 860z"/>
          <g fill="none">
            <path vector-effect="non-scaling-stroke" d="M503 650 540 605 580 580 640 555 715 532 780 540 830 535 900 545 960 565 1000 585 1020 610 1065 645 1040 685 1000 712 950 728 915 735 900 750 850 768 800 758 760 755 710 765 670 750 630 748 560 715 520 690Z"/>
            <path vector-effect="non-scaling-stroke" d="M600 925 662 918M1060 800 1098 800M1065 720 1095 800M290 335H320M1025 245 1085 278"/>
            <use href="#rim" stroke-width="4.800"/>
          </g>
        </g>
      </svg>
      <path d="M2420 1125 2476 1116M2527 1107 2558 1104M2582 1100 2805 1067" stroke="#9a3c4b" stroke-width="1.500"/>
      <path d="M2660 960 2667 983M2677 1015 2709 1119M2715 1140 2720 1153M2738 1208 2780 1330" stroke="#67902c" stroke-width="1.500"/>
      <g fill="none"><circle cx="2697" cy="1082" r="15" stroke="#fff" stroke-width="2"/><circle cx="2697" cy="1082" r="15" stroke="#c5304a" stroke-width="2" stroke-dasharray="6 6"/><path d="M2697 1060v12M2697 1092v12M2674 1082h12M2708 1082h12" stroke="#111" stroke-width="1.500"/></g>
      <circle cx="2697.500" cy="1082.500" r="2.500" fill="#ff9a2e"/>
    </svg>
    <div class="head view-head">
      <button class="pull"><svg class="ic"><use href="#i-view3d"/></svg><svg class="cd"><use href="#i-down"/></svg></button>
      <span class="hsel mode"><svg class="ic"><use href="#i-object"/></svg><select aria-label="Mode"><option>Object Mode</option></select><svg class="cd"><use href="#i-down"/></svg></span>
      <div class="menu"><button>View</button><button>Select</button><button>Add</button><button>Object</button></div>
      <span class="hsel orient"><svg class="ic"><use href="#i-axes"/></svg><select aria-label="Orientation"><option>Global</option></select><svg class="cd"><use href="#i-down"/></svg></span>
      <button class="pull"><svg class="ic"><use href="#i-pivot"/></svg><svg class="cd"><use href="#i-down"/></svg></button>
      <div class="join"><button class="sq"><svg class="ic"><use href="#i-magnet"/></svg></button><button class="pull"><svg class="ic"><use href="#i-snapinc"/></svg><svg class="cd"><use href="#i-down"/></svg></button></div>
      <button class="sq"><svg class="ic"><use href="#i-prop"/></svg></button>
    </div>
    <div class="subhead">
      <div class="join selmodes">
        <button class="sq on"><svg class="ic"><path d="M2 2h18v18H2z" fill="none" stroke="#fff" stroke-width="1.500" stroke-dasharray="3 2"/></svg></button>
        <button class="sq"><svg class="ic"><path d="M9 2h11v12h-5v6H3V9h6z" fill="#ccc"/></svg></button>
        <button class="sq"><svg class="ic"><path d="M8 2h12v12h-5V8H8z" fill="#ccc"/><path d="M3 9h11v11H3z" fill="#444" stroke="#bbb" stroke-dasharray="3 2"/></svg></button>
        <button class="sq"><svg class="ic"><path d="M8 2h12v12h-5v6H3V9h5z" fill="#ccc"/><path d="M8 8h7v6H8z" fill="#333"/></svg></button>
        <button class="sq"><svg class="ic"><path d="M6 6h9v9H6z" fill="#ccc"/><path d="M8 2h12v12M3 8v12h12" fill="none" stroke="#bbb" stroke-width="1.300" stroke-dasharray="3 2"/></svg></button>
      </div>
      <button class="options">Options<svg class="cd"><use href="#i-down"/></svg></button>
    </div>
    <div class="viewbody">
      <div class="toolbar">
        <div class="tg"><button class="on"><svg viewBox="0 0 40 40"><path d="M4 4h32v32H4z" fill="none" stroke="#f0b740" stroke-width="2" stroke-dasharray="6 3"/><path d="M15 11v17l4-4h7z" fill="#fff"/></svg><svg class="cor"><use href="#i-corner"/></svg></button><button><svg viewBox="0 0 40 40" fill="none"><circle cx="20" cy="20" r="16" stroke="#fff" stroke-width="2"/><circle cx="20" cy="20" r="16" stroke="#c2424c" stroke-width="2" stroke-dasharray="7 7"/><path d="M20 8v8M20 24v8M8 20h8M24 20h8" stroke="#aaa" stroke-width="1.500"/></svg></button></div>
        <div class="tg"><button><svg viewBox="0 0 40 40"><path d="M20 3l5 8H15zM20 37l5-8H15zM3 20l8-5v10zM37 20l-8-5v10z" fill="#e6e6e6"/><path d="M20 11v5M20 24v5M11 20h5M24 20h5" stroke="#e6e6e6" stroke-width="2.500"/></svg></button><button><svg viewBox="0 0 40 40"><path d="M7 17C9 9 16 5 24 7M33 23c-2 8-9 12-17 10" fill="none" stroke="#e6e6e6" stroke-width="2.200"/><path d="M3 19h9l-4 7zM28 21h9l-5-7zM20 14l5 6-5 6-5-6z" fill="#ccc"/></svg></button><button><svg viewBox="0 0 40 40"><path d="M8 12V6h25v27h-8" fill="none" stroke="#aaa" stroke-width="2"/><path d="M6 20h13v15H6z" fill="#f0f0f0"/><path d="M20 20l8-8M23 11h6v6" fill="none" stroke="#e6e6e6" stroke-width="2"/></svg><svg class="cor"><use href="#i-corner"/></svg></button><button><svg viewBox="0 0 40 40"><path d="M13 13h14v14H13zM20 2l4 6h-8zM20 38l4-6h-8zM3 20l6-4v8zM37 20l-6-4v8z" fill="#f0f0f0"/><circle cx="20" cy="20" r="14" fill="none" stroke="#ccc" stroke-width="2" stroke-dasharray="15 7" stroke-dashoffset="-4"/></svg></button></div>
        <div class="tg"><button><svg viewBox="0 0 40 40"><path d="M3 28 6 20 21 3l5 4L11 24z" fill="#e6e6e6"/><path d="M4 32c6 8 12 4 16-2s12-6 16 0" fill="none" stroke="#87d1aa" stroke-width="2"/></svg><svg class="cor"><use href="#i-corner"/></svg></button><button><svg viewBox="0 0 40 40"><path d="M7 3h6v28h23v6H7z" fill="#f0f0f0"/><path d="M14 30V13c10 0 17 8 17 17z" fill="#87d1aa"/><path d="M8 8h3M8 13h3M8 18h3M8 23h3M17 36v-3M22 36v-3M27 36v-3M32 36v-3" stroke="#333" stroke-width="1.500"/></svg></button></div>
        <div class="tg"><button><svg viewBox="0 0 40 40"><path d="M10 16h19v20H10zM10 16l6-7h19v20l-6 7M29 16l6-7" fill="none" stroke="#a8d9bd" stroke-width="1.700"/><path d="M8 2v11M2.500 7.500h11" stroke="#6fe0a2" stroke-width="3"/></svg><svg class="cor"><use href="#i-corner"/></svg></button></div>
      </div>
      <p class="hud">User Perspective<br>(116) Scene Collection | Circle</p>
      <div class="navcol">
        <svg class="gizmo" viewBox="-50 -50 100 100"><path d="M0 8-11-25" stroke="#6ba31b" stroke-width="2.500"/><circle cx="-11" cy="-25" r="11" fill="#5f9a12"/><path d="M0 8V-16" stroke="#2c83e8" stroke-width="2"/><circle cy="-25" r="12.500" fill="#2c8ff6"/><path d="M0 8 40 2" stroke="#d6334f" stroke-width="2.500"/><circle cx="47" cy="2" r="12" fill="#d6334f"/><circle cx="-47" cy="16" r="11.500" fill="#6f3a44" stroke="#c53c53" stroke-width="1.500"/><circle cx="-1" cy="43" r="11.500" fill="#323b47" stroke="#3a67a3" stroke-width="1.500"/><circle cx="10" cy="42" r="12" fill="#4f662b" stroke="#7fb81c" stroke-width="1.500"/><text x="0" y="-19">Z</text><text x="47" y="8">X</text></svg>
        <button><svg><use href="#i-zoom"/></svg></button><button><svg><use href="#i-hand"/></svg></button><button><svg><use href="#i-cam"/></svg></button><button><svg><use href="#i-persp"/></svg></button>
      </div>
      <svg class="edge"><use href="#i-left"/></svg>
    </div>
  </section>

  <div class="col col-right">
    <section class="area properties">
      <div class="head">
        <button class="pull"><svg class="ic"><use href="#i-props"/></svg><svg class="cd"><use href="#i-down"/></svg></button>
        <span class="grow"></span>
        <label class="search"><svg class="ic"><use href="#i-search"/></svg><input aria-label="Search properties"></label>
        <span class="grow wide2"></span>
        <button class="sq dark"><svg class="cd"><use href="#i-down"/></svg></button>
      </div>
      <div class="propbody">
        <div class="ptabs">
          <button><svg><use href="#i-tools"/></svg></button>
          <button class="gap"><svg><use href="#i-render"/></svg></button><button><svg><use href="#i-output"/></svg></button><button><svg><use href="#i-layers"/></svg></button><button><svg><use href="#i-scene"/></svg></button><button class="red"><svg><use href="#i-world"/></svg></button>
          <button class="gap orange"><svg><use href="#i-objprop"/></svg></button><button class="cur"><svg><use href="#i-wrenchfill"/></svg></button><button class="blue"><svg><use href="#i-particles"/></svg></button><button class="blue"><svg><use href="#i-physics"/></svg></button><button class="blue"><svg><use href="#i-constraint"/></svg></button><button class="green"><svg><use href="#i-mesh"/></svg></button><button class="red"><svg><use href="#i-material"/></svg></button>
          <button class="gap red"><svg><use href="#i-texture"/></svg></button>
        </div>
        <div class="pmain">
          <nav class="crumbs"><svg class="ic first"><use href="#i-object"/></svg><span>Circle</span><svg class="arr"><use href="#i-right"/></svg><svg class="ic"><use href="#i-geo"/></svg><span>GeometryNodes</span><svg class="ic pin dim"><use href="#i-pin"/></svg></nav>
          <button class="addmod">Add Modifier<svg class="cd"><use href="#i-down"/></svg></button>
          <div class="modifier">
            <div class="mrow">
              <svg class="fold"><use href="#i-fold"/></svg><svg class="ic"><use href="#i-geo"/></svg>
              <div class="idgroup mname"><input value="GeometryNodes" aria-label="Modifier name"><button class="seg"><svg class="ic"><use href="#i-mesh"/></svg></button><button class="seg on"><svg class="ic"><use href="#i-edit"/></svg></button><button class="seg on"><svg class="ic"><use href="#i-monitor"/></svg></button><button class="seg on"><svg class="ic"><use href="#i-camera"/></svg></button><button class="seg drop"><svg class="fold"><use href="#i-fold"/></svg></button></div>
              <button class="bare"><svg class="ic"><use href="#i-x"/></svg></button>
              <svg class="grip" viewBox="0 0 16 10"><path d="M0 1h16M0 5h16M0 9h16" stroke="#aaa" stroke-width="2" stroke-dasharray="2 2.500"/></svg>
            </div>
            <div class="mrow second">
              <div class="idgroup"><button class="idicon" aria-label="Browse node group"><svg class="ic"><use href="#i-nodetree"/></svg><svg class="cd"><use href="#i-down"/></svg></button><input value="Geometry Nodes.001" aria-label="Node group"><button class="seg"><svg class="ic"><use href="#i-shield"/></svg></button><button class="seg"><svg class="ic"><use href="#i-copy"/></svg></button><button class="seg"><svg class="ic"><use href="#i-x"/></svg></button></div>
            </div>
            <button class="sub"><svg class="arr"><use href="#i-right"/></svg>Output Attributes</button>
            <button class="sub"><svg class="arr"><use href="#i-right"/></svg>Internal Dependencies</button>
          </div>
        </div>
      </div>
    </section>

    <section class="area view small-view">
      <svg class="scene" viewBox="3102 1185 737 885" preserveAspectRatio="xMidYMid slice">
        <defs>
          <radialGradient id="bg2" gradientUnits="userSpaceOnUse" cx="3470" cy="1640" r="600"><stop offset="0" stop-color="#3e3e3e"/><stop offset=".6" stop-color="#393939"/><stop offset="1" stop-color="#313131"/></radialGradient>
          <linearGradient id="gmaj" gradientUnits="userSpaceOnUse" x1="0" y1="1600" x2="0" y2="1850"><stop offset="0" stop-color="#4d4d4d" stop-opacity="0"/><stop offset="1" stop-color="#4d4d4d"/></linearGradient>
          <linearGradient id="gmin" gradientUnits="userSpaceOnUse" x1="0" y1="1660" x2="0" y2="2000"><stop offset="0" stop-color="#474747" stop-opacity="0"/><stop offset="1" stop-color="#484848"/></linearGradient>
          <linearGradient id="ay" gradientUnits="userSpaceOnUse" x1="3104" y1="0" x2="3610" y2="0"><stop offset="0" stop-color="#5d7f2b"/><stop offset=".7" stop-color="#5d7f2b"/><stop offset="1" stop-color="#5d7f2b" stop-opacity="0"/></linearGradient>
          <linearGradient id="ax" gradientUnits="userSpaceOnUse" x1="3415" y1="0" x2="3839" y2="0"><stop offset="0" stop-color="#8a3a46" stop-opacity="0"/><stop offset=".2" stop-color="#8a3a46"/><stop offset="1" stop-color="#8a3a46"/></linearGradient>
        </defs>
        <rect x="2900" y="1000" width="1200" height="1300" fill="url(#bg2)"/>
        <g id="grid-small"></g>
        <path d="M3102 1724 3610 1615" stroke="url(#ay)" stroke-width="1.500"/><path d="M3415 1614 3840 1851" stroke="url(#ax)" stroke-width="1.500"/>
        <g fill="none"><circle cx="3470" cy="1645" r="14" stroke="#fff" stroke-width="2"/><circle cx="3470" cy="1645" r="14" stroke="#c5304a" stroke-width="2" stroke-dasharray="5.500 5.500"/><path d="M3470 1618v18M3470 1654v16M3447 1650l14-3M3480 1643l14-3" stroke="#111" stroke-width="1.500"/></g>
        <circle cx="3470" cy="1645.500" r="2.500" fill="#ff9a2e"/>
      </svg>
      <div class="head view-head">
        <button class="pull"><svg class="ic"><use href="#i-view3d"/></svg><svg class="cd"><use href="#i-down"/></svg></button>
        <span class="hsel mode"><svg class="ic"><use href="#i-object"/></svg><select aria-label="Mode"><option>Object Mode</option></select><svg class="cd"><use href="#i-down"/></svg></span>
        <div class="menu"><button>View</button><button>Select</button><button>Add</button><button>Object</button></div>
        <span class="hsel orient"><svg class="ic"><use href="#i-axes"/></svg><select aria-label="Orientation"><option>Global</option></select><svg class="cd"><use href="#i-down"/></svg></span>
        <button class="pull"><svg class="ic"><use href="#i-pivot"/></svg><svg class="cd"><use href="#i-down"/></svg></button>
        <div class="join"><button class="sq"><svg class="ic"><use href="#i-magnet"/></svg></button><button class="pull"><svg class="ic"><use href="#i-snapinc"/></svg><svg class="cd"><use href="#i-down"/></svg></button></div>
      </div>
      <div class="viewbody">
        <svg class="edge l"><use href="#i-right"/></svg>
        <p class="hud">User Perspective<br>(116) Scene Collection | Circle</p>
        <div class="navcol">
          <svg class="gizmo" viewBox="-50 -50 100 100"><circle cx="-25" cy="-12" r="11" fill="#3f3438" stroke="#8f3c4c" stroke-width="1.500"/><path d="M0 2V-35" stroke="#2c83e8" stroke-width="2"/><circle cy="-43" r="12" fill="#2c83e8"/><path d="M0 2 41-7" stroke="#6ba31b" stroke-width="2.500"/><circle cx="41" cy="-7" r="11.500" fill="#6ba31b"/><path d="M0 2 25 16" stroke="#ff3352" stroke-width="2.500"/><circle cx="25" cy="16" r="13" fill="#ff3352"/><circle cx="-41" cy="10" r="12" fill="#4f662b" stroke="#7fb81c" stroke-width="1.500"/><circle cy="47" r="11.500" fill="#32475f" stroke="#3f6cb0" stroke-width="1.500"/><text x="0" y="-37">Z</text><text x="41" y="-1">Y</text><text x="25" y="22">X</text></svg>
          <button><svg><use href="#i-zoom"/></svg></button><button><svg><use href="#i-hand"/></svg></button><button><svg><use href="#i-cam"/></svg></button><button><svg><use href="#i-persp"/></svg></button>
        </div>
        <svg class="edge"><use href="#i-left"/></svg>
      </div>
    </section>
  </div>
</main>

<footer class="status"><svg><use href="#i-mouse-l"/></svg><svg><use href="#i-mouse-m"/></svg><svg><use href="#i-mouse-r"/></svg><span>3.4.0</span></footer>

<footer class="taskbar">
  <button class="start" aria-label="Start"><svg width="24" height="24"><path d="M0 3.500 10 2v9.500H0zM11.500 2 24 0v11.500H11.500zM0 12.800h10V22L0 20.700zM11.500 12.800H24V24l-12.500-1.800z" fill="#fff"/></svg></button>
  <button class="app" aria-label="Cinema 4D"><svg width="34" height="34" viewBox="0 0 34 34"><defs><linearGradient id="c4" x1=".8" y1="0" x2=".2" y2="1"><stop offset="0" stop-color="#4f63c0"/><stop offset=".5" stop-color="#1b2368"/><stop offset="1" stop-color="#0c1140"/></linearGradient></defs><circle cx="17" cy="17" r="16.500" fill="#c3c6d4"/><path d="M30 8c2 10-3 20-13 21C8 29 5 22 8 15 12 7 22 3 30 8z" fill="url(#c4)"/><path d="M6 25C4 14 12 4 24 5l5 3C24-2 7-1 2 11c-1 5 0 10 4 14z" fill="#f2f3fa"/><ellipse cx="17" cy="18" rx="6.500" ry="6" fill="#3f5fc8"/><circle cx="16" cy="17" r="3" fill="#86a3ee"/></svg></button>
  <button class="app" aria-label="File Explorer"><svg width="32" height="28" viewBox="0 0 32 28"><path d="M0 1h13l3 4H0z" fill="#e8a70e"/><path d="M0 4h32v23H0z" fill="#ffd75e"/><path d="M6 28V17c0-2 1-3 3-3h14c2 0 3 1 3 3v11h-6v-7h-8v7z" fill="#3694e0"/></svg></button>
  <button class="app" aria-label="Firefox"><svg width="34" height="34" viewBox="0 0 34 34"><defs><linearGradient id="ff" x1=".8" y1="0" x2=".3" y2="1"><stop offset="0" stop-color="#ffe226"/><stop offset=".45" stop-color="#ff8a1e"/><stop offset=".8" stop-color="#ff2f4f"/><stop offset="1" stop-color="#e31587"/></linearGradient></defs><path d="M22 0c2 5 10 8 11 17 0 9-7 17-16 17S0 27 1 18C1 13 3 9 5 6l2 5 3-5c2 0 3 2 5 3 4-1 6-5 7-9z" fill="url(#ff)"/><circle cx="17.500" cy="18.500" r="7" fill="#7542e5"/><path d="M5 13c4-2 8 0 12 1-1 4-4 3-7 4 1 4 4 7 8 7-6 3-13-1-13-12z" fill="#ff9a2a"/></svg></button>
  <button class="app cur" aria-label="Blender"><svg width="36" height="36"><use href="#i-blendercolor"/></svg></button>
  <span class="grow"></span>
  <div class="tray">
    <svg width="20" height="12"><path d="M1 11 10 2l9 9" fill="none" stroke="#fff" stroke-width="1.500"/></svg>
    <svg width="20" height="20" fill="none" stroke="#dfe5ef" stroke-width="1.300"><path d="M1 19C1 9 9 1 19 1M6 19C6 12 12 6 19 6M11 19c0-4 4-8 8-8"/><circle cx="17" cy="17" r="1.500" fill="#fff"/></svg>
    <svg width="24" height="20" fill="none" stroke="#fff" stroke-width="1.400"><path d="M1 7h4l5-5v16l-5-5H1zM13 7c2 2 2 4 0 6M16 4.500c3 3 3 8 0 11M19 2c5 5 5 11 0 16"/></svg>
    <span class="lang">ENG</span>
    <time><span>2:55 AM</span><span>2/23/2023</span></time>
    <button class="note" aria-label="Notifications"><svg width="38" height="38"><path d="M1 2h24v19h-9l-4 4v-4H1z" fill="#fff"/><path d="M6 8h14M6 12h14M6 16h14" stroke="#1c2a45" stroke-width="1.200"/><circle cx="25" cy="25" r="12" fill="#333" stroke="#888"/><text x="25" y="31" text-anchor="middle">2</text></svg></button>
    <i class="peek"></i>
  </div>
</footer>
<script src="viewport.js"></script>
</body>
</html>
```
FILE: styles.css
```css
* { box-sizing: border-box; }
html, body { margin: 0; height: 100%; }
body {
  display: flex; flex-direction: column; min-height: 100vh; overflow: hidden;
  background: #161616; color: #e6e6e6;
  font: 16px/20px "DejaVu Sans", "Noto Sans", sans-serif;
}
button, input, select { font: inherit; color: inherit; background: none; border: 0; padding: 0; margin: 0; min-width: 0; outline: 0; }
button { display: flex; align-items: center; justify-content: center; white-space: nowrap; }
select { appearance: none; text-overflow: clip; }
svg { display: block; flex: none; }
p, ul, h3 { margin: 0; padding: 0; font: inherit; }
.sprite { position: absolute; width: 0; height: 0; }
.ic { width: 22px; height: 22px; }
.ic20 { width: 20px; height: 20px; }
.ic26 { width: 26px; height: 26px; }
.cd { width: 10px; height: 10px; }
.arr { width: 10px; height: 16px; color: #bbb; }
.fold { width: 14px; height: 14px; }
.dim { color: #8a8a8a; }
.grow { flex: 1; }

/* window chrome */
.titlebar { display: flex; align-items: center; gap: 4px; height: 34px; padding: 0 2px; background: #fff; color: #000; font-family: "Open Sans", "Noto Sans", sans-serif; }
.winbtns { display: flex; margin-left: auto; }
.winbtns button { width: 70px; height: 34px; }
.topbar { display: flex; height: 39px; padding: 0 12px; background: #1d1d1d; color: #d9d9d9; }
.logo { height: 38px; margin-right: 13px; }
.menu { display: flex; gap: 22px; }
.topbar .menu { height: 38px; margin-right: 32px; }
.tabs { display: flex; align-items: flex-end; flex: 1; color: #999; }
.tabs button { height: 29px; padding: 0 14px; border-radius: 5px 5px 0 0; }
.tabs .active { background: #303030; color: #fff; }
.tabs button:last-child { padding: 0 12px; }

/* data-block fields */
.idgroup { display: flex; align-items: center; height: 28px; flex: 1; border: 1px solid #3d3d3d; border-radius: 5px; overflow: hidden; background: #1d1d1d; }
.idgroup.top { flex: none; width: 277px; margin: 6px 0 0 8px; }
.idgroup input { flex: 1; padding-left: 11px; width: 0; height: 26px; }
.idicon { width: 45px; height: 28px; gap: 2px; background: #282828; border-right: 1px solid #3d3d3d; }
.seg { width: 29px; height: 28px; background: #545454; border-left: 1px solid #3d3d3d; }
.seg.off { background: #303030; color: #5c5c5c; }
.seg.on { background: #4772b3; color: #fff; }
.seg.drop { background: #282828; }
.topbar .pin { margin-right: 4px; color: #777; }

/* areas */
.workspace { display: grid; grid-template-columns: 2303fr 793fr 737fr; gap: 3px; flex: 1; padding: 1px 1px 0 0; min-height: 0; }
.col { display: flex; flex-direction: column; gap: 3px; min-height: 0; min-width: 0; }
.area { position: relative; overflow: hidden; border-radius: 6px; min-height: 0; min-width: 0; }
.outliner { flex: 908 1 0; background: #282828; }
.nodes { flex: 1086 1 0; background: #1d1d1d; }
.properties { flex: 1108 1 0; background: #303030; display: flex; flex-direction: column; }
.small-view { flex: 885 1 0; }
.head { position: relative; display: flex; align-items: center; gap: 8px; height: 37px; padding: 0 11px 0 12px; }
.pull { gap: 3px; width: 45px; height: 28px; border: 1px solid #3d3d3d; border-radius: 5px; background: #282828; }
.sq { width: 28px; height: 28px; border-radius: 5px; background: #545454; }
.sq.dark { background: #282828; border: 1px solid #3d3d3d; }
.sq.on { background: #4772b3; color: #fff; }
.join { display: flex; }
.join > :not(:last-child) { border-radius: 5px 0 0 5px; }
.join > :not(:first-child) { border-radius: 0 5px 5px 0; }
.search { display: flex; align-items: center; width: 174px; height: 28px; padding-left: 6px; border: 1px solid #3d3d3d; border-radius: 5px; background: #1d1d1d; }
.search input { flex: 1; width: 0; }
.outliner .wide { margin-left: 46px; }
.properties .wide2 { margin-left: 12px; }

/* outliner */
.tree { margin-top: 2px; height: 100%; list-style: none; background: repeating-linear-gradient(#282828 0 29px, #2b2b2b 29px 58px); color: #c9c9c9; }
.tree li { display: flex; align-items: center; height: 29px; padding-right: 18px; }
.badge { display: flex; align-items: center; justify-content: center; width: 28px; height: 28px; margin-right: 5px; border-radius: 6px; color: #dcdcdc; }
.badge.grey { background: #505050; }
.badge.blue { background: #566d9b; color: #d98b5b; }
.lvl0 { padding-left: 31px; }
.lvl1 { padding-left: 60px; }
.tree .sel { background: #334d80; position: relative; padding-left: 60px; }
.disc { position: absolute; left: 40px; border-left: 9px solid #ccc; border-top: 5px solid transparent; border-bottom: 5px solid transparent; }
.obj { color: #ffaf3f; }
.mod { color: #6f95f0; margin-left: 32px; }
.data { color: #14c1a0; margin-left: 9px; }
.flags { display: flex; gap: 9px; margin-left: auto; color: #f2f2f2; }
.flags svg { width: 20px; height: 18px; }

/* node editor */
.node-head { display: grid; grid-template-columns: 1fr auto 1fr; height: 40px; }
.side, .mid { display: flex; align-items: center; gap: 8px; }
.side .menu { margin-left: 10px; }
.mid { margin-right: 32px; gap: 11px; }
.mid .idgroup { width: 322px; }
.end { justify-content: flex-end; }
.crumbs { position: relative; display: flex; align-items: center; color: #dedede; }
.crumbs .ic { margin-right: 13px; }
.crumbs .arr { margin: 0 13px 0 22px; }
.node-crumbs { height: 34px; margin-top: 13px; }
.node-crumbs .arr:first-child { margin: 0 18px 0 0; }
.node-crumbs .arr.end { margin: 0 0 0 auto; color: #999; }
.canvas, .links { position: absolute; inset: 0; width: 100%; height: 100%; }
.vbar { position: absolute; right: 1px; top: 52px; bottom: 20px; width: 7px; border-radius: 4px; background: #2c2c2c; }
.hbar { position: absolute; left: 12px; width: 84%; bottom: 3px; height: 6px; border-radius: 3px; background: #323232; }
.node { position: absolute; width: 259px; padding-bottom: 8px; border-radius: 7px; background: #303030; box-shadow: 0 0 0 1px #161616, 0 3px 10px 2px rgba(0,0,0,.5); font-size: 19px; line-height: 24px; text-shadow: 0 1px 2px #000; }
.node.active { box-shadow: 0 0 0 2px #eee, 0 3px 10px 3px rgba(0,0,0,.5); }
.n-group { left: 97px; top: 193px; }
.n-m2v { left: 536px; top: 179px; width: 370px; }
.n-v2m { left: 1157px; top: 143px; width: 314px; }
.n-del { left: 1619px; top: 168px; }
.n-merge { left: 2026px; top: 184px; }
.n-sub { left: 860px; top: 599px; }
.n-noise { left: 437px; top: 702px; }
.node h3 { display: flex; align-items: center; gap: 11px; height: 36px; margin-bottom: 7px; padding-left: 19px; border-radius: 7px 7px 0 0; background: #1d725e; border-bottom: 1px solid #1a4a40; white-space: nowrap; }
.node h3 svg { width: 16px; height: 16px; }
.node h3.input { background: #1d1d1d; border-color: #1a1a1a; }
.node h3.conv { background: #246283; border-color: #1b4258; }
.node h3.tex { background: #79461d; border-color: #4d2e15; }
.row { position: relative; display: flex; align-items: center; height: 38px; padding: 0 18px; }
.row.out { justify-content: flex-end; padding-right: 20px; }
.row.last { margin-bottom: 7px; }
.row b { position: absolute; left: -8px; top: 11px; width: 16px; height: 16px; border-radius: 50%; border: 1px solid #111; background: #a1a1a1; }
.row.out b { left: auto; right: -8px; }
.geo b { background: #00d6a3; }
.bool b { background: #cca6d6; }
.vec b { background: #6363c7; }
.col-s b { background: #c7c729; }
.ext b { background: #303030; border: 2px solid #8a8a8a; }
.dia b { border-radius: 1px; width: 14px; height: 14px; left: -7px; top: 12px; transform: rotate(45deg); }
.dia.out b { right: -7px; }
.dot b::after { content: ""; position: absolute; left: 4px; top: 4px; width: 4px; height: 4px; border-radius: 50%; background: #111; }
.props { display: flex; flex-direction: column; gap: 9px; padding: 17px 18px 7px; }
.prop { display: flex; align-items: center; justify-content: flex-end; gap: 16px; }
.dd { position: relative; display: block; height: 35px; flex: 1; min-height: 35px; }
.prop .dd { flex: none; width: 160px; }
.n-m2v .prop .dd { width: 192px; }
.dd select { width: 100%; height: 35px; padding: 0 12px; border: 1px solid #3d3d3d; border-radius: 6px; background: #282828; text-shadow: inherit; }
.dd .cd { position: absolute; right: 6px; top: 13px; width: 13px; height: 13px; }
.num { display: flex; align-items: center; flex: 1; height: 34px; padding: 0 24px 0 28px; border-radius: 6px; background: #545454; overflow: hidden; }
.num span { white-space: nowrap; }
.num input { flex: 1; width: 0; text-align: right; text-shadow: inherit; }
.num.half { background: linear-gradient(90deg, #4772b3 49%, #545454 49%); }
.tick { display: flex; align-items: center; gap: 6px; }
.tick input { appearance: none; width: 24px; height: 24px; border-radius: 4px; background: #545454; }
.tick input:checked { background: #4772b3; position: relative; }
.tick input:checked::after { content: ""; position: absolute; left: 8px; top: 3px; width: 7px; height: 13px; border: solid #fff; border-width: 0 3px 3px 0; transform: rotate(40deg); }

/* 3D views */
.scene { position: absolute; inset: 0; width: 100%; height: 100%; }
.view-head { background: rgba(48,48,48,.85); padding-right: 0; gap: 9px; }
.view-head .menu { margin: 0 26px 0 11px; gap: 21px; }
.view-head > *, .view-head button { flex: none; }
.hsel { position: relative; display: flex; align-items: center; height: 28px; padding-left: 7px; border: 1px solid #3d3d3d; border-radius: 5px; background: #282828; }
.hsel select { height: 26px; width: 100%; padding-left: 8px; }
.hsel .cd { position: absolute; right: 4px; top: 9px; }
.mode { width: 157px; }
.orient { width: 114px; }
.subhead { position: relative; display: flex; justify-content: space-between; align-items: center; height: 40px; padding: 1px 11px 0 62px; background: rgba(48,48,48,.55); }
.selmodes { gap: 0; }
.selmodes .sq { border-right: 1px solid #444; }
.selmodes .sq:not(:first-child):not(:last-child) { border-radius: 0; }
.options { gap: 9px; width: 96px; height: 28px; border: 1px solid #3d3d3d; border-radius: 5px; background: #282828; }
.viewbody { position: relative; display: flex; align-items: flex-start; padding: 10px 11px 0 12px; }
.toolbar { display: flex; flex-direction: column; gap: 8px; margin-right: 26px; }
.tg { border-radius: 5px; overflow: hidden; background: #222; box-shadow: 0 0 0 1px #222; }
.tg button { position: relative; width: 61px; height: 49px; background: #282828; }
.tg button + button { border-top: 1px solid #3a3a3a; height: 50px; }
.tg button > svg:first-child { width: 36px; height: 36px; }
.tg .on { background: #4772b3; }
.tg .cor { position: absolute; right: 3px; bottom: 3px; width: 6px; height: 6px; color: #999; }
.hud { flex: 1; line-height: 27px; color: #fff; text-shadow: 0 1px 2px #000; margin-top: -2px; }
.navcol { display: flex; flex-direction: column; align-items: center; gap: 8px; margin-top: 5px; width: 44px; }
.gizmo { width: 100px; height: 100px; margin-bottom: 11px; overflow: visible; margin-left: -84px; }
.gizmo text { font-size: 16px; font-weight: bold; text-anchor: middle; fill: #15202c; }
.navcol button { width: 38px; height: 38px; border-radius: 50%; background: #262626; color: #e6e6e6; }
.navcol button svg { width: 25px; height: 25px; }
.edge { position: absolute; right: 0; top: 20px; width: 10px; height: 16px; color: #aaa; }
.edge.l { right: auto; left: 0; top: 24px; }
.small-view .viewbody { padding: 15px 12px 0; }
.small-view .navcol { margin-top: 10px; }
.small-view .gizmo { margin-bottom: 6px; margin-left: -82px; }

/* properties */
.propbody { display: flex; flex: 1; }
.ptabs { display: flex; flex-direction: column; gap: 2px; width: 42px; padding: 12px 0 0 4px; background: #1d1d1d; color: #b5b5b5; }
.ptabs button { height: 38px; border-radius: 5px 0 0 5px; }
.ptabs svg { width: 22px; height: 22px; }
.ptabs .gap { margin-top: 11px; }
.ptabs .cur { background: #303030; color: #7b9df5; }
.ptabs .red { color: #b3525c; }
.ptabs .blue { color: #5b80c9; }
.ptabs .orange { color: #b0653a; }
.ptabs .green { color: #13b98c; }
.pmain { flex: 1; padding: 12px 13px 0 12px; min-width: 0; }
.pmain .crumbs { height: 28px; padding-left: 4px; margin-bottom: 25px; }
.pmain .pin { margin: 0 0 0 auto; }
.addmod { width: 100%; height: 29px; padding: 0 6px 0 11px; justify-content: space-between; border: 1px solid #3d3d3d; border-radius: 5px; background: #282828; }
.modifier { margin-top: 14px; padding: 4px 12px 0 8px; border: 1px solid #4b6a9c; border-radius: 5px; background: #3d3d3d; }
.mrow { display: flex; align-items: center; gap: 8px; height: 29px; }
.mrow .idgroup { border: 0; }
.mname { margin-left: 8px; }
.mname .fold { width: 12px; height: 12px; }
.second { margin: 14px 0 0 4px; }
.grip { width: 16px; height: 10px; margin: 0 -4px 0 12px; }
.sub { height: 36px; padding-left: 24px; gap: 7px; }
.modifier .sub:nth-of-type(1) { margin-top: 12px; }

/* bottom bars */
.status { display: flex; align-items: center; height: 30px; padding: 0 12px 0 16px; background: #1d1d1d; color: #888; }
.status svg { width: 18px; height: 22px; margin-right: 332px; }
.status span { margin-left: auto; }
.taskbar { display: flex; height: 60px; background: linear-gradient(90deg, #233943, #213848 40%, #1c2c48 80%, #1b2743); color: #fff; font: 16px/28px "Open Sans", "Noto Sans", sans-serif; }
.start { width: 72px; margin-right: 11px; }
.app { width: 61px; margin-right: 14px; border-bottom: 3px solid #76b9ed; border-top: 3px solid transparent; }
.app:nth-of-type(4) { margin-right: 8px; }
.app.cur { width: 73px; background: #4e626b; margin-right: 0; border-top-color: #4e626b; }
.tray { display: flex; align-items: center; }
.tray > svg { margin-right: 17px; }
.tray > svg:nth-of-type(1) { margin-right: 18px; }
.tray > svg:nth-of-type(2) { margin-right: 13px; }
.tray > svg:nth-of-type(3) { margin-right: 14px; }
.lang { width: 35px; }
time { display: flex; flex-direction: column; align-items: center; width: 105px; margin-left: 8px; font-size: 17px; }
.note { margin-left: 17px; }
.note text { font: bold 15px "Open Sans", sans-serif; fill: #fff; }
.peek { width: 1px; height: 60px; margin: 0 7px 0 18px; background: #8a92a3; }
```
FILE: viewport.js
```js
const NS = "http://www.w3.org/2000/svg";

// Draws the ground grid in perspective: o is the projected origin, vx and vy the
// vanishing points of the two axes, m and k the foreshortening per unit.
function drawGrid(id, { o, vx, vy, m, k, from, to, minor, major }) {
  const g = document.getElementById(id);
  const at = (s, t) => {
    const w = 1 + m * s + k * t;
    return [0, 1].map(i => ((o[i] + m * s * vx[i] + k * t * vy[i]) / w).toFixed(1)).join(" ");
  };
  const paths = { minor: "", major: "" };
  for (let n = from; n <= to; n++) {
    if (n === 0) continue;
    const kind = n % 10 === 0 ? "major" : "minor";
    const tNear = (0.05 - 1 - m * n) / k;
    const sNear = (0.05 - 1 - k * n) / m;
    paths[kind] += `M${at(n, tNear)}L${at(n, tNear + 60 / k)}M${at(sNear, n)}L${at(sNear + 60 / m, n)}`;
  }
  for (const kind of ["minor", "major"]) {
    const p = document.createElementNS(NS, "path");
    p.setAttribute("d", paths[kind]);
    const style = kind === "minor" ? minor : major;
    for (const a in style) p.setAttribute(a, style[a]);
    g.appendChild(p);
  }
}

drawGrid("grid-main", {
  o: [2697.5, 1082], vx: [11800, -240], vy: [2289, -240], m: 0.0185, k: 0.0875,
  from: -45, to: 40,
  minor: { "stroke-width": 1.2, opacity: 0.75 }, major: { "stroke-width": 1.6 }
});
drawGrid("grid-small", {
  o: [3470, 1645], vx: [3066, 1420], vy: [4517, 1420], m: 0.0099, k: 0.0062,
  from: -140, to: 100,
  minor: { "stroke-width": 1, stroke: "url(#gmin)" }, major: { "stroke-width": 1.4, stroke: "url(#gmaj)" }
});

// Small facets along the rounded edges of the torus.
let seed = 7;
const rnd = () => (seed = (seed * 16807) % 2147483647) / 2147483647;
const facets = document.getElementById("facets");
function band(cx, cy, rx, ry, a0, a1, rows, depth, lo, hi) {
  for (let r = rows - 1; r >= 0; r--) {
    for (let a = a0; a < a1; a += 0.045) {
      const x = cx - 20 + Math.cos(a) * (rx + r * depth * 0.5);
      const y = cy - 20 + Math.sin(a) * (ry + r * depth);
      const v = Math.round(lo + rnd() * (hi - lo) - r * 8);
      const p = document.createElementNS(NS, "path");
      const w = 34 + rnd() * 10, h = depth + 10, slope = -Math.cos(a) * 14;
      p.setAttribute("d", `M${x} ${y}l${w} ${slope} 4 ${h} ${-w} ${-slope}z`);
      p.setAttribute("fill", `rgb(${v},${v + 2},${v + 2})`);
      facets.appendChild(p);
    }
  }
}
band(765, 590, 610, 400, 0.3, 2.85, 4, 26, 142, 174);
band(755, 540, 330, 215, 3.2, 6.2, 2, 24, 138, 168);
```
